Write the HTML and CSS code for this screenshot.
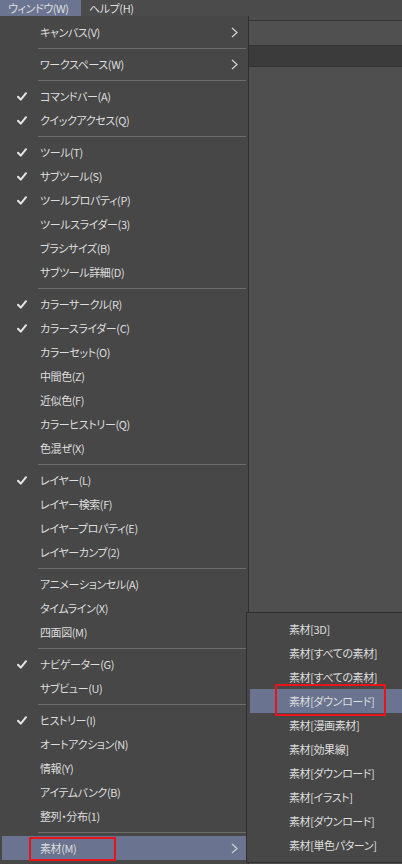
FILE: index.html
```html
<!DOCTYPE html>
<html lang="ja">
<head>
<meta charset="utf-8">
<link rel="stylesheet" href="styles.css">
</head>
<body>
<div class="app">
  <div class="menubar">
    <span class="mb-item active">ウィンドウ(W)</span>
    <span class="mb-item">ヘルプ(H)</span>
  </div>
  <div class="main">
    <div class="menu">
      <div class="item"><span class="check"></span><span class="label">キャンバス(V)</span><svg class="chev" viewBox="0 0 7 11"><polyline points="1,1 6,5.5 1,10"/></svg></div>
      <div class="sep"></div>
      <div class="item"><span class="check"></span><span class="label">ワークスペース(W)</span><svg class="chev" viewBox="0 0 7 11"><polyline points="1,1 6,5.5 1,10"/></svg></div>
      <div class="sep"></div>
      <div class="item"><svg class="check" viewBox="0 0 10 9"><polyline points="1,4.8 3.8,7.6 9,1.2"/></svg><span class="label">コマンドバー(A)</span></div>
      <div class="item"><svg class="check" viewBox="0 0 10 9"><polyline points="1,4.8 3.8,7.6 9,1.2"/></svg><span class="label">クイックアクセス(Q)</span></div>
      <div class="sep"></div>
      <div class="item"><svg class="check" viewBox="0 0 10 9"><polyline points="1,4.8 3.8,7.6 9,1.2"/></svg><span class="label">ツール(T)</span></div>
      <div class="item"><svg class="check" viewBox="0 0 10 9"><polyline points="1,4.8 3.8,7.6 9,1.2"/></svg><span class="label">サブツール(S)</span></div>
      <div class="item"><svg class="check" viewBox="0 0 10 9"><polyline points="1,4.8 3.8,7.6 9,1.2"/></svg><span class="label">ツールプロパティ(P)</span></div>
      <div class="item"><span class="check"></span><span class="label">ツールスライダー(3)</span></div>
      <div class="item"><span class="check"></span><span class="label">ブラシサイズ(B)</span></div>
      <div class="item"><span class="check"></span><span class="label">サブツール詳細(D)</span></div>
      <div class="sep"></div>
      <div class="item"><svg class="check" viewBox="0 0 10 9"><polyline points="1,4.8 3.8,7.6 9,1.2"/></svg><span class="label">カラーサークル(R)</span></div>
      <div class="item"><svg class="check" viewBox="0 0 10 9"><polyline points="1,4.8 3.8,7.6 9,1.2"/></svg><span class="label">カラースライダー(C)</span></div>
      <div class="item"><span class="check"></span><span class="label">カラーセット(O)</span></div>
      <div class="item"><span class="check"></span><span class="label">中間色(Z)</span></div>
      <div class="item"><span class="check"></span><span class="label">近似色(F)</span></div>
      <div class="item"><span class="check"></span><span class="label">カラーヒストリー(Q)</span></div>
      <div class="item"><span class="check"></span><span class="label">色混ぜ(X)</span></div>
      <div class="sep"></div>
      <div class="item"><svg class="check" viewBox="0 0 10 9"><polyline points="1,4.8 3.8,7.6 9,1.2"/></svg><span class="label">レイヤー(L)</span></div>
      <div class="item"><span class="check"></span><span class="label">レイヤー検索(F)</span></div>
      <div class="item"><span class="check"></span><span class="label">レイヤープロパティ(E)</span></div>
      <div class="item"><span class="check"></span><span class="label">レイヤーカンプ(2)</span></div>
      <div class="sep"></div>
      <div class="item"><span class="check"></span><span class="label">アニメーションセル(A)</span></div>
      <div class="item"><span class="check"></span><span class="label">タイムライン(X)</span></div>
      <div class="item"><span class="check"></span><span class="label">四面図(M)</span></div>
      <div class="sep"></div>
      <div class="item"><svg class="check" viewBox="0 0 10 9"><polyline points="1,4.8 3.8,7.6 9,1.2"/></svg><span class="label">ナビゲーター(G)</span></div>
      <div class="item"><span class="check"></span><span class="label">サブビュー(U)</span></div>
      <div class="sep"></div>
      <div class="item"><svg class="check" viewBox="0 0 10 9"><polyline points="1,4.8 3.8,7.6 9,1.2"/></svg><span class="label">ヒストリー(I)</span></div>
      <div class="item"><span class="check"></span><span class="label">オートアクション(N)</span></div>
      <div class="item"><span class="check"></span><span class="label">情報(Y)</span></div>
      <div class="item"><span class="check"></span><span class="label">アイテムバンク(B)</span></div>
      <div class="item"><span class="check"></span><span class="label">整列・分布(1)</span></div>
      <div class="sep"></div>
      <div class="item hl"><span class="check"></span><span class="label">素材(M)</span><svg class="chev" viewBox="0 0 7 11"><polyline points="1,1 6,5.5 1,10"/></svg><span class="redbox main-box"></span></div>
    </div>
    <div class="workspace">
      <div class="ws-gap"></div>
      <div class="ws-strip"></div>
      <div class="ws-band"></div>
      <div class="ws-rest"></div>
    </div>
  </div>
  <div class="submenu">
    <div class="sitem">素材[3D]</div>
    <div class="sitem">素材[すべての素材]</div>
    <div class="sitem">素材[すべての素材]</div>
    <div class="sitem hl">素材[ダウンロード]<span class="redbox sub-box"></span></div>
    <div class="sitem">素材[漫画素材]</div>
    <div class="sitem">素材[効果線]</div>
    <div class="sitem">素材[ダウンロード]</div>
    <div class="sitem">素材[イラスト]</div>
    <div class="sitem">素材[ダウンロード]</div>
    <div class="sitem">素材[単色パターン]</div>
  </div>
</div>
</body>
</html>
```

FILE: styles.css
```css
* { box-sizing: border-box; }
html, body {
  margin: 0;
  padding: 0;
  background: #4f4f4f;
}
body {
  width: 402px;
  height: 864px;
  overflow: hidden;
  font-family: "Noto Sans CJK JP", "Noto Sans", sans-serif;
  font-size: 11px;
  letter-spacing: -0.4px;
  font-feature-settings: "palt";
  color: #dedede;
}
.app {
  position: relative;
  width: 402px;
  height: 864px;
  display: flex;
  flex-direction: column;
}
.menubar {
  height: 16px;
  display: flex;
  align-items: stretch;
  background: #4b4b4b;
  flex: none;
}
.mb-item {
  display: flex;
  align-items: center;
  padding: 0 10px 0 8px;
  line-height: 16px;
}
.mb-item.active {
  background: #6b7490;
  width: 81px;
  padding-right: 0;
}
.main {
  flex: 1;
  display: flex;
  min-height: 0;
}
.menu {
  width: 249px;
  flex: none;
  background: #474747;
  border-right: 1px solid #2f2f2f;
  padding: 4px 0 3px;
  display: flex;
  flex-direction: column;
}
.item {
  position: relative;
  height: 24px;
  margin: 0 2px;
  display: flex;
  align-items: center;
  padding-right: 8px;
}
.check {
  width: 38px;
  height: 9px;
  flex: none;
  padding: 0 13px 0 15px;
  fill: none;
  stroke: #e6e6e6;
  stroke-width: 2;
  stroke-linecap: round;
  stroke-linejoin: round;
}
.label {
  flex: 1;
  white-space: nowrap;
}
.chev {
  width: 7px;
  height: 11px;
  fill: none;
  stroke: #cfcfcf;
  stroke-width: 1.3;
}
.item.hl {
  background: #6a7490;
}
.sep {
  height: 8px;
  display: flex;
  align-items: center;
  padding: 0 2px 0 38px;
}
.sep::before {
  content: "";
  display: block;
  flex: 1;
  height: 1px;
  background: #6d6d6d;
}
.redbox {
  position: absolute;
  border: 2px solid #e8141a;
}
.main-box {
  left: 27px;
  top: 1px;
  width: 87px;
  height: 24px;
}
.workspace {
  flex: 1;
  display: flex;
  flex-direction: column;
}
.ws-gap {
  height: 4px;
  background: #4d4d4d;
}
.ws-strip {
  height: 25px;
  background: #505050;
  border-top: 1px solid #383838;
}
.ws-band {
  height: 22px;
  background: #3b3b3b;
  border-top: 1px solid #333333;
  border-bottom: 1px solid #333333;
}
.ws-rest {
  flex: 1;
  background: #4f4f4f;
}
.submenu {
  position: absolute;
  left: 246px;
  top: 612px;
  width: 170px;
  height: 251px;
  background: #474747;
  border: 1px solid #2f2f2f;
  padding-top: 4px;
  display: flex;
  flex-direction: column;
}
.sitem {
  position: relative;
  height: 24px;
  margin-left: 3px;
  padding-left: 39px;
  display: flex;
  align-items: center;
  white-space: nowrap;
}
.sitem.hl {
  background: #6a7490;
}
.sub-box {
  left: 25px;
  top: -5px;
  width: 111px;
  height: 32px;
}
```
